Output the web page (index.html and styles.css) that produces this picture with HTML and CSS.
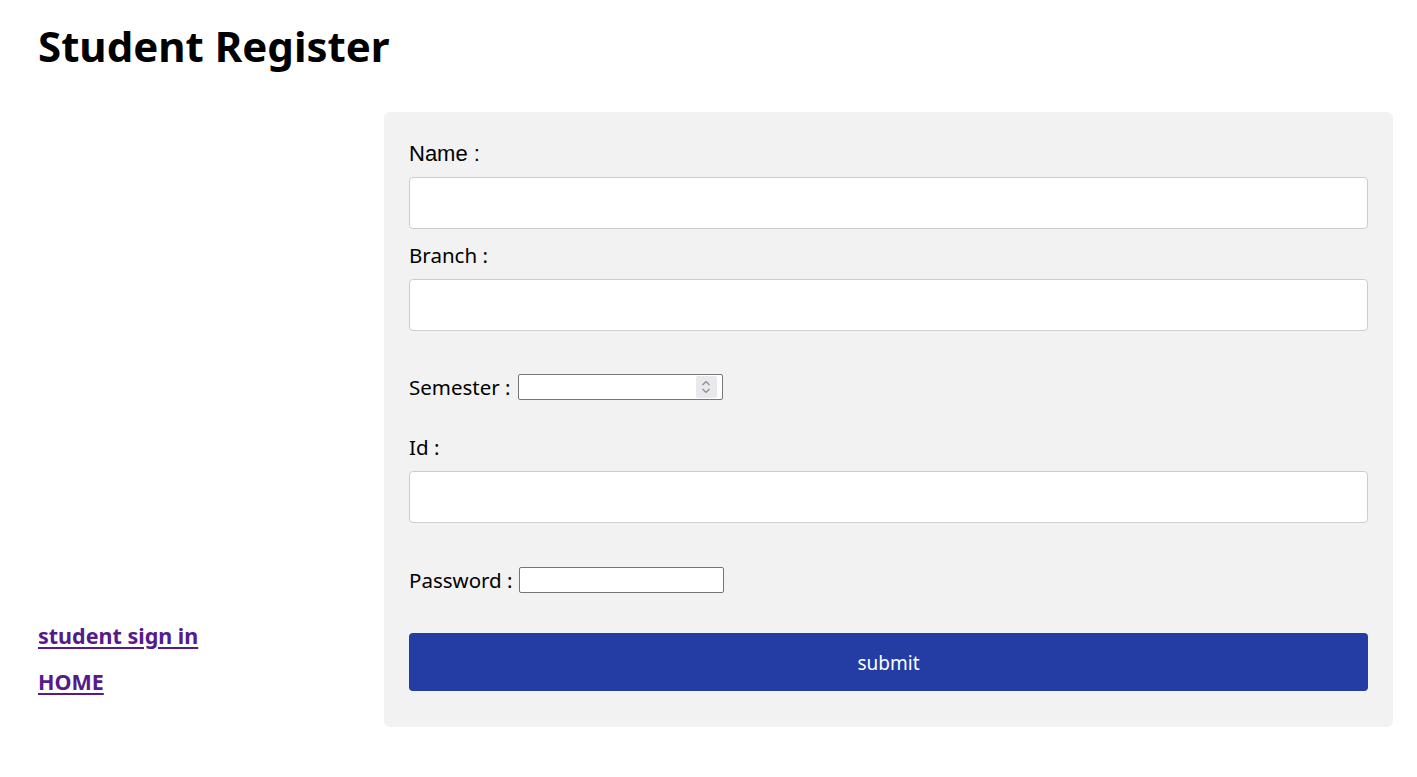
FILE: index.html
```html
<!DOCTYPE html>
<html lang="en">
<head>
<meta charset="utf-8">
<title>Student Register</title>
<link rel="stylesheet" href="styles.css">
</head>
<body>
<div class="page">
  <h1 class="title">Student Register</h1>
  <div class="layout">
    <nav class="side">
      <a class="side-link" href="#signin">student sign in</a>
      <a class="side-link" href="#home">HOME</a>
    </nav>
    <form class="card">
      <label class="field-label label-arial" for="name">Name :</label>
      <input class="text-input" id="name" type="text">
      <label class="field-label" for="branch">Branch :</label>
      <input class="text-input" id="branch" type="text">
      <div class="inline-row row-semester">
        <label class="inline-label" for="sem">Semester :</label>
        <span class="number-wrap">
          <input class="small-input" id="sem" type="number">
          <span class="spinner" aria-hidden="true">
            <svg width="12" height="18" viewBox="0 0 12 18">
              <path d="M2.5 7 L6 3.5 L9.5 7" fill="none" stroke="#8a8a8a" stroke-width="1.2"/>
              <path d="M2.5 11 L6 14.5 L9.5 11" fill="none" stroke="#8a8a8a" stroke-width="1.2"/>
            </svg>
          </span>
        </span>
      </div>
      <label class="field-label label-id" for="sid">Id :</label>
      <input class="text-input" id="sid" type="text">
      <div class="inline-row row-password">
        <label class="inline-label" for="pw">Password :</label>
        <input class="small-input" id="pw" type="password">
      </div>
      <button class="submit-btn" type="button">submit</button>
    </form>
  </div>
</div>
</body>
</html>
```
FILE: styles.css
```css
* { box-sizing: border-box; }
html, body { margin: 0; padding: 0; background: #ffffff; }
body {
  font-family: "Noto Sans", "Open Sans", sans-serif;
  color: #000;
}
.page {
  padding: 16px 24px 0 38px;
}
.title {
  margin: 0;
  font-size: 42px;
  line-height: 60px;
  font-weight: 700;
}
.layout {
  display: grid;
  grid-template-columns: 346px 1fr;
  margin-top: 36px;
}
.side {
  display: flex;
  flex-direction: column;
  justify-content: flex-end;
  align-items: flex-start;
  padding-bottom: 22px;
}
.side-link {
  font-size: 21.5px;
  font-weight: 700;
  line-height: 46px;
  color: #551a8b;
  text-decoration: underline;
  text-underline-offset: 3px;
}
.card {
  background: #f2f2f2;
  border-radius: 6px;
  padding: 25px 25px 36px 25px;
  display: flex;
  flex-direction: column;
  align-items: stretch;
}
.field-label {
  display: block;
  font-size: 20.5px;
  line-height: 30px;
  margin-top: 11px;
  margin-bottom: 9px;
}
.label-arial {
  font-family: "Liberation Sans", Arial, sans-serif;
  font-size: 22px;
  margin-top: 2px;
  margin-bottom: 8px;
}
.label-id { margin-top: 30px; margin-bottom: 9px; }
.text-input {
  display: block;
  width: 100%;
  height: 52px;
  border: 1px solid #cccccc;
  border-radius: 4px;
  background: #fff;
  padding: 0 15px;
  font-size: 18px;
  font-family: inherit;
}
.inline-row {
  display: flex;
  align-items: center;
  height: 30px;
  margin-top: 41px;
}
.row-password { margin-top: 42px; }
.inline-label {
  font-size: 20.5px;
  line-height: 30px;
  margin-right: 7px;
}
.row-password .inline-label { margin-right: 6px; }
.number-wrap {
  position: relative;
  display: inline-block;
  height: 26px;
}
.small-input {
  display: block;
  width: 205px;
  height: 26px;
  border: 1px solid #767676;
  border-radius: 2px;
  background: #fff;
  font-size: 14px;
  padding: 0 4px;
}
.small-input::-webkit-inner-spin-button { -webkit-appearance: none; margin: 0; }
.spinner {
  position: absolute;
  top: 2px;
  right: 6px;
  width: 21px;
  height: 22px;
  background: #e9e9ed;
  border-radius: 2px;
  display: flex;
  align-items: center;
  justify-content: center;
  pointer-events: none;
}
.submit-btn {
  margin-top: 38px;
  height: 58px;
  width: 100%;
  background: #233da4;
  color: #fff;
  border: none;
  border-radius: 4px;
  font-family: "Noto Sans", "Open Sans", sans-serif;
  font-size: 19px;
  padding-top: 3px;
}
```
